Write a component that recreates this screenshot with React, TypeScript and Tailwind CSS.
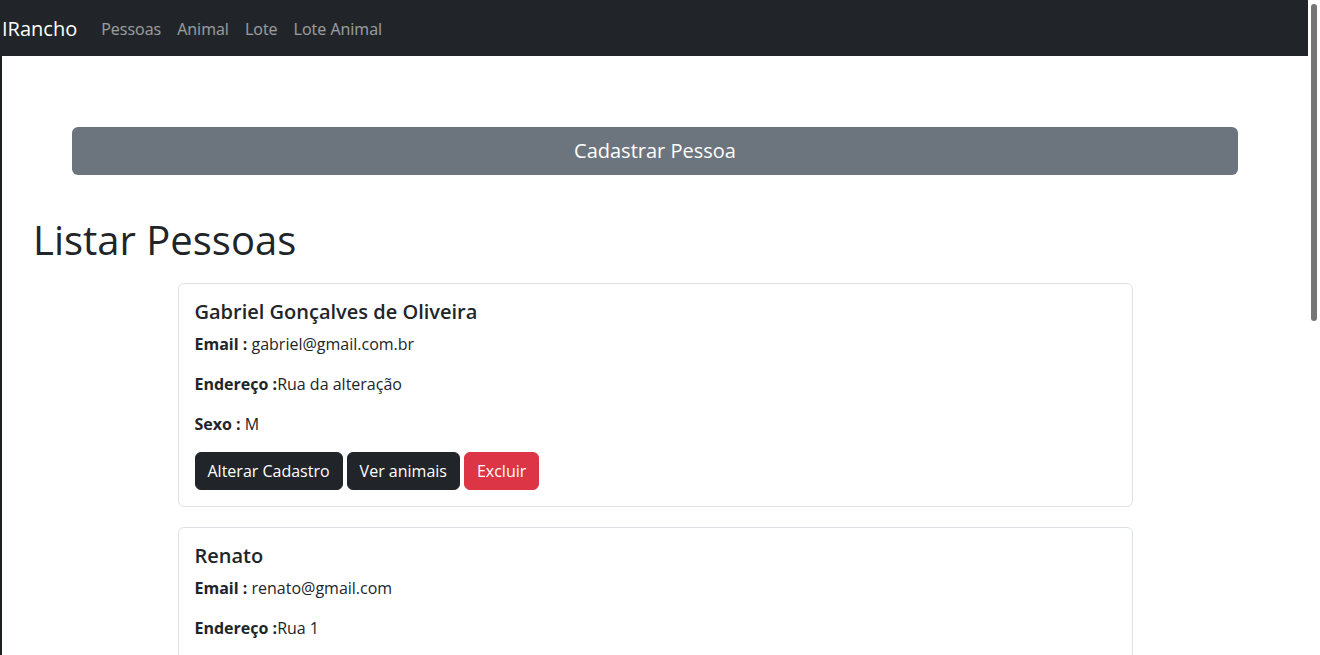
import React from "react";

const pessoas = [
  {
    nome: "Gabriel Gonçalves de Oliveira",
    email: "gabriel@gmail.com.br",
    endereco: "Rua da alteração",
    sexo: "M",
  },
  {
    nome: "Renato",
    email: "renato@gmail.com",
    endereco: "Rua 1",
    sexo: "M",
  },
  {
    nome: "Maria",
    email: "maria@gmail.com",
    endereco: "Rua 2",
    sexo: "F",
  },
];

const App = () => {
  return (
    <div className="h-screen flex overflow-hidden bg-white text-[#212529] font-['Open_Sans','Noto_Sans',sans-serif]">
      <div className="flex-1 min-w-0">
        {/* Navbar */}
        <nav className="h-14 pt-0.5 bg-[#212529] flex items-center">
          <span className="text-xl text-white pl-[2px] mr-4">IRancho</span>
          <ul className="flex items-center">
            {["Pessoas", "Animal", "Lote", "Lote Animal"].map((item) => (
              <li key={item}>
                <a className="px-2 text-base text-white/55">{item}</a>
              </li>
            ))}
          </ul>
        </nav>

        <main className="border-l-2 border-[#1c1f23] pb-10">
          <div className="pt-[71px] px-[70px]">
            <button className="w-full h-12 rounded-md bg-[#6c757d] text-white text-xl">
              Cadastrar Pessoa
            </button>
          </div>

          <h1 className="mt-[41px] ml-[31px] text-[40px] leading-[48px] font-medium">
            Listar Pessoas
          </h1>

          <div className="mt-[19px] w-[955px] mx-auto flex flex-col gap-5">
            {pessoas.map((p) => (
              <div
                key={p.nome}
                className="border border-[#dee2e6] rounded-md p-4 bg-white"
              >
                <h5 className="text-xl leading-6 font-semibold mb-2">{p.nome}</h5>
                <p className="leading-6 mb-4">
                  <b className="font-bold">Email :</b> {p.email}
                </p>
                <p className="leading-6 mb-4">
                  <b className="font-bold">Endereço :</b>
                  {p.endereco}
                </p>
                <p className="leading-6 mb-4">
                  <b className="font-bold">Sexo :</b> {p.sexo}
                </p>
                <div className="flex gap-1">
                  <button className="px-3 py-1.5 leading-6 rounded-md border border-[#212529] bg-[#212529] text-white">
                    Alterar Cadastro
                  </button>
                  <button className="px-3 py-1.5 leading-6 rounded-md border border-[#212529] bg-[#212529] text-white">
                    Ver animais
                  </button>
                  <button className="px-3 py-1.5 leading-6 rounded-md border border-[#dc3545] bg-[#dc3545] text-white">
                    Excluir
                  </button>
                </div>
              </div>
            ))}
          </div>
        </main>
      </div>

      {/* scrollbar */}
      <div className="w-3 shrink-0 bg-white pl-[3px] pt-1">
        <div className="w-[6px] h-[317px] rounded-full bg-[#757575]" />
      </div>
    </div>
  );
};

export default App;
